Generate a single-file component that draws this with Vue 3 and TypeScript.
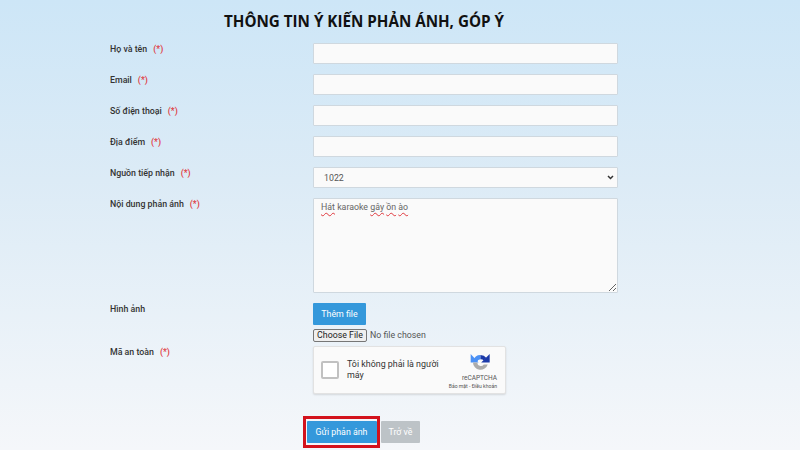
<script setup lang="ts">
interface Field {
  label: string;
  type: 'input' | 'select';
}

const fields: Field[] = [
  { label: 'Họ và tên', type: 'input' },
  { label: 'Email', type: 'input' },
  { label: 'Số điện thoại', type: 'input' },
  { label: 'Địa điểm', type: 'input' },
  { label: 'Nguồn tiếp nhận', type: 'select' },
];

// words the browser's spell checker has underlined
const feedback = ['Hát', ' karaoke ', 'gây', ' ', 'ồn', ' ', 'ào'];
const flagged = new Set(['Hát', 'gây', 'ồn', 'ào']);
</script>

<template>
  <div class="page">
    <h1 class="title">THÔNG TIN Ý KIẾN PHẢN ÁNH, GÓP Ý</h1>

    <form class="feedback-form" @submit.prevent>
      <template v-for="field in fields" :key="field.label">
        <label class="label">{{ field.label }}<span class="req">(*)</span></label>
        <input v-if="field.type === 'input'" class="control" type="text" />
        <select v-else class="control select">
          <option>1022</option>
        </select>
      </template>

      <label class="label">Nội dung phản ánh<span class="req">(*)</span></label>
      <div class="control textarea">
        <span v-for="(word, i) in feedback" :key="i" :class="{ misspelled: flagged.has(word) }">{{ word }}</span>
      </div>

      <label class="label">Hình ảnh</label>
      <div class="file-cell">
        <button class="btn btn-primary add-file" type="button">Thêm file</button>
        <input class="file-input" type="file" />
      </div>

      <label class="label">Mã an toàn<span class="req">(*)</span></label>
      <div class="captcha">
        <span class="captcha-check"></span>
        <span class="captcha-text">Tôi không phải là người máy</span>
        <div class="captcha-brand">
          <svg class="captcha-logo" viewBox="0 0 32 32" width="21" height="21">
            <path d="M5 13A11.5 11.5 0 0 1 16 4.5V11A5 5 0 0 0 11 15z" fill="#4a90f5" />
            <path d="M1 3 1 16 13 16z" fill="#4a90f5" />
            <path d="M16 4.5A11.5 11.5 0 0 1 25 9L21 13A6 6 0 0 0 16 11z" fill="#1c3aa9" />
            <path d="M30 3V16H17z" fill="#1c3aa9" />
            <path d="M4.5 16H11A5.5 5.5 0 0 0 21 19H27A11.5 11.5 0 0 1 4.5 16z" fill="#ababab" />
          </svg>
          <span class="brand-name">reCAPTCHA</span>
          <span class="brand-links">Bảo mật - Điều khoản</span>
        </div>
      </div>

      <div class="actions">
        <span class="highlight">
          <button class="btn btn-primary" type="submit">Gửi phản ánh</button>
        </span>
        <button class="btn btn-muted" type="button">Trở về</button>
      </div>
    </form>
  </div>
</template>

<style>
html,
body {
  margin: 0;
  padding: 0;
}
</style>

<style scoped>
.page {
  width: 800px;
  height: 450px;
  box-sizing: border-box;
  overflow: hidden;
  padding: 11px 0 0 110px;
  background: linear-gradient(180deg, #cde6f7 0%, #dcebf6 40%, #f5f7fa 100%);
  font-family: Roboto, "Liberation Sans", sans-serif;
}

.title {
  margin: 0 0 12px 114px;
  font-family: "Open Sans", "Liberation Sans", sans-serif;
  font-size: 15.2px;
  line-height: 20px;
  font-weight: 700;
  color: #111;
  white-space: nowrap;
}

.feedback-form {
  display: grid;
  grid-template-columns: 203px 305px;
  row-gap: 10px;
  align-items: start;
}

.label {
  font-size: 8.8px;
  line-height: 12px;
  font-weight: 500;
  color: #333;
}

.req {
  margin-left: 6px;
  color: #e0393e;
}

.control {
  box-sizing: border-box;
  width: 305px;
  height: 21px;
  margin: 0;
  padding: 0 6px;
  background: #fafafa;
  border: 1px solid #cfd8df;
  border-radius: 1px;
  font-family: inherit;
  font-size: 8.8px;
  color: #555;
  outline: none;
}

.select {
  padding-left: 10px;
  appearance: none;
  background: #fafafa url("data:image/svg+xml,%3Csvg xmlns='http://www.w3.org/2000/svg' width='7' height='5'%3E%3Cpath d='M1 1l2.5 2.5L6 1' fill='none' stroke='%23333' stroke-width='1.5'/%3E%3C/svg%3E") no-repeat right 3px center;
}

.textarea {
  height: 95px;
  padding: 1px 7px;
  line-height: 14px;
  color: #666;
  resize: both;
  overflow: hidden;
  white-space: pre-wrap;
}

.misspelled {
  text-decoration: underline wavy #e0393e 1px;
  text-underline-offset: 2px;
}

.file-cell {
  display: flex;
  flex-direction: column;
  align-items: flex-start;
  gap: 4px;
  margin-bottom: -7px;
}

.btn {
  border: 0;
  border-radius: 1px;
  font-family: inherit;
  font-size: 8.8px;
  color: #fff;
  padding: 0;
}

.btn-primary {
  width: 70px;
  height: 22px;
  background: #3498db;
}

.add-file {
  width: 53px;
  height: 22px;
}

.btn-muted {
  width: 39px;
  height: 22px;
  background: #bdc3c7;
}

.file-input {
  font-family: inherit;
  font-size: 8.8px;
  height: 14px;
  color: #555;
  width: 200px;
}

.file-input::file-selector-button {
  box-sizing: border-box;
  width: 54px;
  height: 13px;
  margin-right: 3px;
  padding: 0;
  font-family: inherit;
  font-size: 8.8px;
  line-height: 11px;
  color: #222;
  background: #efefef;
  border: 1px solid #767676;
  border-radius: 2px;
}

.captcha {
  display: flex;
  align-items: center;
  box-sizing: border-box;
  width: 193px;
  height: 48px;
  padding: 0 8px 0 7px;
  background: #fafafa;
  border: 1px solid #e2e2e2;
  border-radius: 2px;
  box-shadow: 0 1px 2px rgba(0, 0, 0, 0.12);
}

.captcha-check {
  flex: none;
  box-sizing: border-box;
  width: 18px;
  height: 18px;
  background: #fff;
  border: 2px solid #c1c1c1;
  border-radius: 2px;
}

.captcha-text {
  width: 100px;
  margin-left: 8px;
  font-size: 8.9px;
  line-height: 11px;
  color: #333;
}

.captcha-brand {
  display: flex;
  flex-direction: column;
  align-items: flex-end;
  align-self: flex-start;
  margin-left: auto;
  margin-top: 5px;
}

.captcha-logo {
  display: block;
  margin: 0 6px 1px 0;
}

.brand-name {
  font-size: 6.5px;
  line-height: 8px;
  color: #555;
}

.brand-links {
  margin-top: 1px;
  font-size: 5.1px;
  line-height: 7px;
  color: #555;
  white-space: nowrap;
}

.actions {
  grid-column: 1 / -1;
  display: flex;
  align-items: center;
  gap: 1px;
  margin-top: 12px;
  margin-left: 193px;
}

.highlight {
  display: flex;
  align-items: center;
  justify-content: center;
  box-sizing: border-box;
  width: 77px;
  height: 32px;
  border: 3px solid #d3121c;
}
</style>
